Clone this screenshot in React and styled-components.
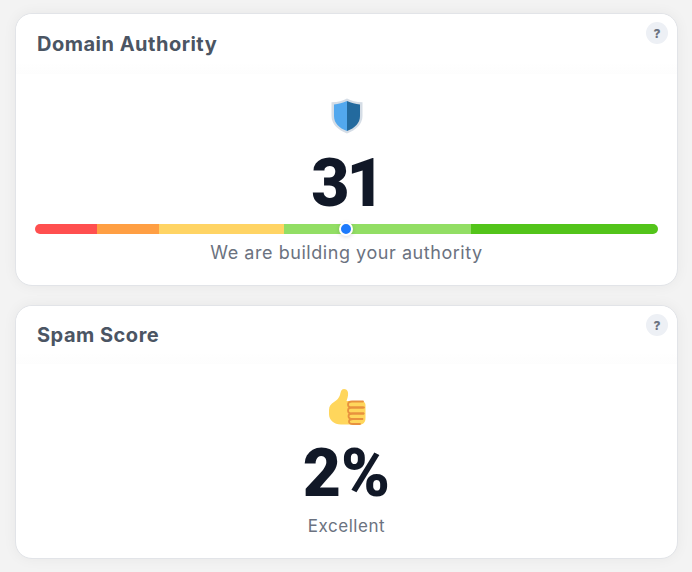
import React from "react";
import styled, { createGlobalStyle } from "styled-components";

const Global = createGlobalStyle`
  html, body { margin: 0; padding: 0; background: #f3f3f3; }
  body { font-family: Inter, "Open Sans", sans-serif; }
`;

const Page = styled.div`
  width: 692px;
  height: 572px;
  box-sizing: border-box;
  padding: 13px 14px 0 15px;
  display: flex;
  flex-direction: column;
  gap: 19px;
  overflow: hidden;
`;

const Card = styled.section`
  position: relative;
  box-sizing: border-box;
  height: ${(p) => p.$h}px;
  background: #fff;
  border: 1px solid #e2e4e8;
  border-radius: 17px;
  box-shadow: 0 0 14px rgba(0, 0, 0, 0.05);
  display: flex;
  flex-direction: column;
`;

const Header = styled.header`
  height: ${(p) => p.$h}px;
  padding: 0 0 0 21px;
  display: flex;
  align-items: center;
  background: linear-gradient(#fff, #fff 80%, #fdfdfd);
  border-radius: 17px 17px 0 0;
`;

const Title = styled.h2`
  margin: 0;
  font-size: 20px;
  line-height: 1;
  font-weight: 700;
  letter-spacing: 0.5px;
  color: #4b5563;
`;

const Help = styled.span`
  position: absolute;
  top: 8px;
  right: 9px;
  width: 22px;
  height: 22px;
  border-radius: 50%;
  background: #edf0f5;
  color: #6b7280;
  font-size: 12px;
  font-weight: 800;
  display: flex;
  align-items: center;
  justify-content: center;
`;

const Body = styled.div`
  display: flex;
  flex-direction: column;
  align-items: center;
  padding-top: ${(p) => p.$top}px;
`;

const IconBox = styled.div`
  height: 38px;
  display: flex;
  align-items: center;
  justify-content: center;
`;

const Score = styled.div`
  font-family: Roboto, Inter, sans-serif;
  font-size: 66px;
  line-height: 72px;
  margin-top: ${(p) => p.$mt}px;
  font-weight: 900;
  letter-spacing: ${(p) => p.$ls}px;
  color: #111827;
`;

const Bar = styled.div`
  position: relative;
  width: 623px;
  height: 10px;
  margin-top: 4px;
  margin-left: -1px;
  display: flex;
  border-radius: 5px;
`;

const Segment = styled.div`
  flex: ${(p) => p.$w};
  background: ${(p) => p.$c};
  &:first-child { border-radius: 5px 0 0 5px; }
  &:nth-last-child(2) { border-radius: 0 5px 5px 0; }
`;

const Marker = styled.span`
  position: absolute;
  left: 50%;
  top: 50%;
  width: 10px;
  height: 10px;
  box-sizing: content-box;
  transform: translate(-50%, -50%);
  background: #1d7afc;
  border: 2px solid #fff;
  border-radius: 50%;
  box-shadow: 0 1px 4px rgba(0, 0, 0, 0.15);
`;

const Caption = styled.p`
  margin: ${(p) => p.$mt}px 0 0;
  font-size: ${(p) => p.$fs}px;
  line-height: 24px;
  font-weight: 400;
  letter-spacing: 0.55px;
  color: #6b7280;
`;

const Shield = () => (
  <svg width="32" height="36" viewBox="0 0 32 36">
    <path d="M16 .5C20 3 25 4 31.5 4.2V18C31.500 26 25 32 16 35.500 7 32 .5 26 .5 18V4.200C7 4 12 3 16 .5Z" fill="#d5dde6" />
    <path d="M16 3C12 5 7.500 6 3 6.400V18C3 25 8 30 16 33Z" fill="#52a8ee" />
    <path d="M16 3C20 5 24.500 6 29 6.400V18C29 25 24 30 16 33Z" fill="#236a9e" />
  </svg>
);

const Thumb = () => (
  <svg width="38" height="38" viewBox="0 0 38 38">
    <path d="M1 22c0-4 2-6 5-8 3-2 5-4 6-7 .7-2.500 1-6 4-6 3.500 0 4.500 3 4 6.500-.3 2-1 4-1.500 5.500H33c3 0 4.500 2 4.500 4v13c0 4-2 6.500-5.500 6.500H13C6 36.500 1 32 1 26v-4Z" fill="#ffd65c" />
    <g fill="none" stroke="#e8913e" strokeWidth="1.800" strokeLinecap="round">
      <path d="M35 13.500H24c-2.500 0-4 1.500-4 3s1.500 3 4 3h11" />
      <path d="M36 19.500H24c-2.500 0-4 1.500-4 3s1.500 3 4 3h11.500" />
      <path d="M35.500 25.500H24.500c-2.500 0-4 1.300-4 2.800s1.500 2.700 4 2.700h10" />
      <path d="M34 31H25c-2.500 0-4 1.200-4 2.500s1.500 2.500 4 2.500h7" />
    </g>
  </svg>
);

const segments = [
  [10, "#ff4f4f"],
  [10, "#ff9f43"],
  [20, "#ffd464"],
  [30, "#92de64"],
  [30, "#53c41a"],
];

export default function App() {
  return (
    <>
      <Global />
      <Page>
        <Card $h={273}>
          <Header $h={60}><Title>Domain Authority</Title></Header>
          <Help>?</Help>
          <Body $top={23}>
            <IconBox><Shield /></IconBox>
            <Score $mt={13} $ls={-3}>31</Score>
            <Bar>
              {segments.map(([w, c]) => <Segment key={c} $w={w} $c={c} />)}
              <Marker />
            </Bar>
            <Caption $mt={7} $fs={18}>We are building your authority</Caption>
          </Body>
        </Card>
        <Card $h={254}>
          <Header $h={58}><Title>Spam Score</Title></Header>
          <Help>?</Help>
          <Body $top={24}>
            <IconBox><Thumb /></IconBox>
            <Score $mt={12} $ls={0}>2%</Score>
            <Caption $mt={4} $fs={17}>Excellent</Caption>
          </Body>
        </Card>
      </Page>
    </>
  );
}
